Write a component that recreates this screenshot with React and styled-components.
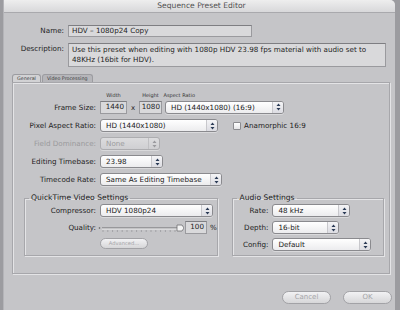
import styled, { createGlobalStyle } from 'styled-components';

const GlobalStyle = createGlobalStyle`
  html, body {
    margin: 0;
    padding: 0;
    background: #9c9ca0;
    font-family: "DejaVu Sans", "Liberation Sans", sans-serif;
    font-size: 7.2px;
    color: #1e1e1e;
  }
`;

const Window = styled.div`
  margin-left: 3px;
  width: 392px;
  height: 310px;
  background: #c5c5c8;
  border-left: 1px solid #b4b4b8;
  border-top-right-radius: 5px;
  overflow: hidden;
  display: flex;
  flex-direction: column;
  box-sizing: border-box;
`;

const TitleBar = styled.div`
  height: 13px;
  flex: none;
  background: linear-gradient(#eeeeee, #d8d8da);
  border-bottom: 1px solid #a9a9ad;
  box-sizing: border-box;
  text-align: center;
  line-height: 12px;
  font-size: 7.6px;
  color: #505050;
  padding-left: 4px;
`;

const Body = styled.div`
  padding-top: 12px;
  display: flex;
  flex-direction: column;
`;

const TopGrid = styled.div`
  display: grid;
  grid-template-columns: 60px 1fr;
  column-gap: 4px;
  row-gap: 6px;
  align-items: start;
`;

const Label = styled.div`
  text-align: right;
  line-height: ${p => p.$h || 12}px;
  white-space: nowrap;
  color: ${p => (p.$disabled ? '#9a9a9c' : '#1e1e1e')};
`;

const TextBox = styled.div`
  width: ${p => p.$w}px;
  height: ${p => p.$h || 12}px;
  box-sizing: border-box;
  background: #d9d9db;
  border: 1px solid #9a9a9e;
  border-top-color: #7e7e82;
  padding: 0 ${p => p.$pad ?? 3}px;
  line-height: 10px;
  white-space: nowrap;
  overflow: hidden;
  text-align: ${p => p.$align || 'left'};
  font-size: ${p => p.$fs || 7.2}px;
`;

const Tabs = styled.div`
  display: flex;
  margin: 7px 0 0 8px;
  height: 8px;
  align-items: flex-end;
`;

const Tab = styled.div`
  height: 8px;
  box-sizing: border-box;
  padding: 0 4px;
  font-size: 4.8px;
  line-height: 7px;
  color: #3a3a3a;
  border: 1px solid #9c9ca0;
  border-bottom: none;
  border-radius: 3px 3px 0 0;
  background: ${p => (p.$active ? '#d2d2d4' : '#b6b6ba')};
  margin-right: 1px;
  white-space: nowrap;
`;

const Panel = styled.div`
  margin: 0 5px 0 8px;
  height: 192px;
  box-sizing: border-box;
  border: 1px solid #a7a7ab;
  box-shadow: inset 1px 1px 0 #e4e4e6, 1px 1px 0 #e4e4e6;
  padding-top: 9px;
  display: flex;
  flex-direction: column;
`;

const PanelGrid = styled.div`
  display: grid;
  grid-template-columns: 83px 1fr;
  column-gap: 4px;
  row-gap: 5px;
  align-items: center;
`;

const Inline = styled.div`
  display: flex;
  align-items: center;
`;

const SmallHead = styled.div`
  width: ${p => p.$w}px;
  font-size: 5px;
  text-align: ${p => p.$align || 'center'};
  color: #333;
  line-height: 7px;
  white-space: nowrap;
`;

const Times = styled.div`
  width: 12px;
  text-align: center;
  font-size: 7px;
  line-height: 12px;
  padding-top: 2px;
`;

const SelectBox = styled.div`
  width: ${p => p.$w}px;
  height: 13px;
  box-sizing: border-box;
  display: flex;
  align-items: center;
  border: 1px solid ${p => (p.$disabled ? '#adadb0' : '#8a8a8e')};
  border-radius: 3px;
  background: ${p => (p.$disabled ? 'linear-gradient(#dcdcde, #cfcfd2)' : 'linear-gradient(#ffffff, #ececee)')};
  box-shadow: 0 1px 0 rgba(255,255,255,0.35);
  color: ${p => (p.$disabled ? '#9c9c9e' : '#1a1a1a')};
`;

const SelectText = styled.div`
  flex: 1;
  padding-left: 5px;
  white-space: nowrap;
  overflow: hidden;
  line-height: 11px;
`;

const ArrowPart = styled.div`
  width: 10px;
  height: 11px;
  flex: none;
  display: flex;
  align-items: center;
  justify-content: center;
  border-left: 1px solid ${p => (p.$disabled ? '#c0c0c3' : '#c8c8cc')};
  background: ${p => (p.$disabled ? 'transparent' : 'linear-gradient(#f4f4f6, #dcdce2)')};
  border-radius: 0 2px 2px 0;
`;

const Select = ({ w, children, disabled }) => (
  <SelectBox $w={w} $disabled={disabled}>
    <SelectText>{children}</SelectText>
    <ArrowPart $disabled={disabled}>
      <svg width="5" height="8" viewBox="0 0 5 8">
        <path d="M2.5 0.5 L4.5 3 L0.5 3 Z M2.5 7.5 L4.5 5 L0.5 5 Z" fill={disabled ? '#9a9a9e' : '#2a3a55'} />
      </svg>
    </ArrowPart>
  </SelectBox>
);

const Spacer = styled.div`
  width: ${p => p.$w}px;
  flex: none;
`;

const CheckRow = styled.label`
  display: flex;
  align-items: center;
  gap: 3px;
  margin-left: 15px;
  white-space: nowrap;
`;

const CheckBox = styled.span`
  width: 8px;
  height: 8px;
  box-sizing: border-box;
  border: 1px solid #8c8c90;
  border-radius: 1px;
  background: linear-gradient(#ffffff, #e6e6e8);
`;

const Groups = styled.div`
  display: flex;
  margin: 8px 5px 0 11px;
  gap: 14px;
`;

const Group = styled.fieldset`
  margin: 0;
  width: ${p => p.$w}px;
  height: 62px;
  box-sizing: border-box;
  border: 1px solid #a7a7ab;
  box-shadow: inset 1px 1px 0 #e4e4e6, 1px 1px 0 #e4e4e6;
  padding: 0;
  min-inline-size: 0;
`;

const Legend = styled.legend`
  padding: 0 2px;
  margin-left: 4px;
  font-size: 7.6px;
  line-height: 8px;
  color: #222;
`;

const GroupGrid = styled.div`
  display: grid;
  grid-template-columns: ${p => p.$label}px 1fr;
  column-gap: 4px;
  row-gap: 4px;
  align-items: center;
  padding-top: 2px;
`;

const Slider = styled.div`
  width: 86px;
  height: 12px;
  margin-left: -2px;
`;

const Percent = styled.span`
  margin-left: 3px;
`;

const PillButton = styled.div`
  width: ${p => p.$w}px;
  height: ${p => p.$h}px;
  box-sizing: border-box;
  border: 1px solid #a2a2a6;
  border-radius: ${p => p.$h / 2}px;
  background: linear-gradient(#f2f2f4, #d6d6d8);
  text-align: center;
  line-height: ${p => p.$h - 2}px;
  font-size: ${p => p.$fs}px;
  color: #a4a4a8;
`;

const Footer = styled.div`
  display: flex;
  justify-content: flex-end;
  gap: 12px;
  padding: 17px 3px 0 0;
`;

const App = () => (
  <>
    <GlobalStyle />
    <Window>
      <TitleBar>Sequence Preset Editor</TitleBar>
      <Body>
        <TopGrid>
          <Label>Name:</Label>
          <TextBox $w={184}>HDV – 1080p24 Copy</TextBox>
          <Label>Description:</Label>
          <TextBox $w={318} $h={24}>
            <div style={{ paddingTop: 1 }}>Use this preset when editing with 1080p HDV 23.98 fps material with audio set to</div>
            <div>48KHz (16bit for HDV).</div>
          </TextBox>
        </TopGrid>
        <Tabs>
          <Tab $active>General</Tab>
          <Tab>Video Processing</Tab>
        </Tabs>
        <Panel>
          <PanelGrid>
            <div />
            <Inline style={{ marginBottom: -4 }}>
              <SmallHead $w={27}>Width</SmallHead>
              <SmallHead $w={12} />
              <SmallHead $w={23}>Height</SmallHead>
              <SmallHead $w={40} $align="left">&nbsp;Aspect Ratio</SmallHead>
            </Inline>
            <Label $h={13}>Frame Size:</Label>
            <Inline>
              <TextBox $w={27} $h={13} $align="right" $pad={2}>1440</TextBox>
              <Times>x</Times>
              <TextBox $w={23} $h={13} $align="right" $pad={1}>1080</TextBox>
              <Spacer $w={3} />
              <Select w={119}>HD (1440x1080) (16:9)</Select>
            </Inline>
            <Label $h={13}>Pixel Aspect Ratio:</Label>
            <Inline>
              <Select w={118}>HD (1440x1080)</Select>
              <CheckRow>
                <CheckBox />
                Anamorphic 16:9
              </CheckRow>
            </Inline>
            <Label $h={13} $disabled>Field Dominance:</Label>
            <Select w={60} disabled>None</Select>
            <Label $h={13}>Editing Timebase:</Label>
            <Select w={63}>23.98</Select>
            <Label $h={13}>Timecode Rate:</Label>
            <Select w={122}>Same As Editing Timebase</Select>
          </PanelGrid>
          <Groups>
            <Group $w={195}>
              <Legend>QuickTime Video Settings</Legend>
              <GroupGrid $label={71}>
                <Label $h={13}>Compressor:</Label>
                <Select w={113}>HDV 1080p24</Select>
                <Label $h={13}>Quality:</Label>
                <Inline>
                  <Slider>
                    <svg width="86" height="12" viewBox="0 0 86 12">
                      <circle cx="1.5" cy="6" r="0.8" fill="#555" />
                      <line x1="4" y1="6" x2="80" y2="6" stroke="#6a6a6e" strokeWidth="1" />
                      <line x1="4" y1="7" x2="80" y2="7" stroke="#eeeeee" strokeWidth="1" />
                      {Array.from({ length: 16 }).map((_, i) => (
                        <line key={i} x1={5 + i * 4.8} y1="8" x2={5 + i * 4.8} y2="10" stroke="#8a8a8e" strokeWidth="0.6" />
                      ))}
                      <path d="M79 3 L84 3 L86 6 L84 9 L79 9 Z" fill="#f4f4f4" stroke="#6e6e72" strokeWidth="0.8" />
                    </svg>
                  </Slider>
                  <Spacer $w={1} />
                  <TextBox $w={22} $h={13} $align="right" $pad={2}>100</TextBox>
                  <Percent>%</Percent>
                </Inline>
                <div />
                <PillButton $w={48} $h={11} $fs={5.2}>Advanced...</PillButton>
              </GroupGrid>
            </Group>
            <Group $w={152}>
              <Legend>Audio Settings</Legend>
              <GroupGrid $label={35}>
                <Label $h={13}>Rate:</Label>
                <Select w={78}>48 kHz</Select>
                <Label $h={13}>Depth:</Label>
                <Select w={67}>16-bit</Select>
                <Label $h={13}>Config:</Label>
                <Select w={99}>Default</Select>
              </GroupGrid>
            </Group>
          </Groups>
        </Panel>
        <Footer>
          <PillButton $w={49} $h={13} $fs={7}>Cancel</PillButton>
          <PillButton $w={49} $h={13} $fs={7}>OK</PillButton>
        </Footer>
      </Body>
    </Window>
  </>
);

export default App;
